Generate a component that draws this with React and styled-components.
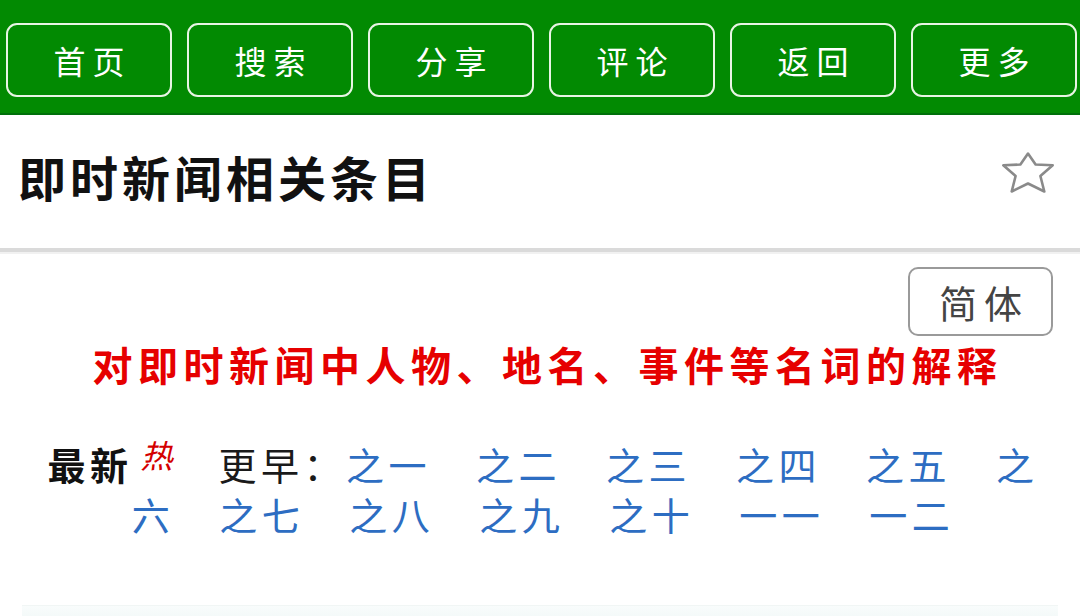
import React from "react";
import styled, { createGlobalStyle } from "styled-components";

const Global = createGlobalStyle`
  html, body {
    margin: 0;
    padding: 0;
    background: #ffffff;
  }
  body {
    font-family: "Noto Sans CJK SC", "Noto Sans", sans-serif;
    color: #111;
  }
`;

const Page = styled.div`
  width: 1080px;
  min-height: 616px;
  overflow: hidden;
  background: #fff;
`;

const NavBar = styled.header`
  background: #028a02;
  padding: 23px 3px 16px 6px;
  border-bottom: 2px solid #00700a;
  display: grid;
  grid-template-columns: repeat(6, 1fr);
  column-gap: 15px;
`;

const NavButton = styled.button`
  height: 74px;
  border: 2.5px solid #e8f5e4;
  border-radius: 11px;
  background: transparent;
  color: #fff;
  font-family: "Noto Sans CJK SC", sans-serif;
  font-size: 32px;
  letter-spacing: 7px;
  padding: 0 0 0 7px;
  cursor: pointer;
`;

const TitleBar = styled.section`
  height: 137px;
  box-sizing: border-box;
  display: flex;
  align-items: center;
  justify-content: space-between;
  padding: 0 25px 12px 18px;
  border-bottom: 4px solid #dadada;
  box-shadow: 0 2px 0 #f1f1f1;
`;

const Title = styled.h1`
  margin: 0;
  font-size: 48px;
  font-weight: 700;
  letter-spacing: 4px;
  color: #111;
`;

const StarButton = styled.button`
  align-self: flex-start;
  margin-top: 36px;
  padding: 0;
  border: 0;
  background: none;
  display: flex;
  cursor: pointer;
`;

const Content = styled.main`
  padding-top: 15px;
`;

const LangRow = styled.div`
  display: flex;
  justify-content: flex-end;
  padding-right: 27px;
`;

const LangButton = styled.button`
  width: 145px;
  height: 69px;
  border: 2px solid #9a9a9a;
  border-radius: 10px;
  background: #fff;
  color: #444;
  font-family: "Noto Sans CJK SC", sans-serif;
  font-size: 38px;
  letter-spacing: 7px;
  padding: 0 0 0 7px;
  cursor: pointer;
`;

const Lead = styled.p`
  margin: 3px 0 0;
  line-height: 50px;
  text-align: center;
  font-size: 40px;
  font-weight: 700;
  letter-spacing: 5.5px;
  padding-left: 15px;
  color: #e60000;
`;

const Index = styled.p`
  margin: 49px 0 0;
  line-height: 50px;
  text-align: center;
  white-space: nowrap;
  font-size: 38px;
  letter-spacing: 4.5px;
  padding-left: 6px;
  color: #1a1a1a;
`;

const Latest = styled.strong`
  font-weight: 700;
  color: #111;
`;

const Hot = styled.em`
  font-size: 32px;
  letter-spacing: 0;
  color: #d40000;
  vertical-align: 12px;
  line-height: 1;
  margin: 0 46px 0 8px;
`;

const Earlier = styled.span`
  color: #1a1a1a;
`;

const PartLink = styled.a`
  color: #2d6dc2;
  text-decoration: none;
  cursor: pointer;
  & + & {
    margin-left: 45px;
  }
`;

const Strip = styled.div`
  margin: 66px 22px 0;
  height: 12px;
  border-top: 1px solid #f1f6f5;
  background: linear-gradient(#f9fcfc, #f3f9f8);
`;

const Star = () => (
  <svg width="54" height="43" viewBox="0 0 54 43" aria-hidden="true">
    <polygon
      points="27,2.5 34.6,13.5 51.7,14.3 39.4,25 43.3,40.5 27,32.5 10.7,40.5 14.6,25 2.3,14.3 19.4,13.5"
      fill="none"
      stroke="#8a8a8a"
      strokeWidth="2.6"
      strokeLinejoin="round"
    />
  </svg>
);

const navItems = ["首页", "搜索", "分享", "评论", "返回", "更多"];
const firstLine = ["之一", "之二", "之三", "之四", "之五"];
const secondLine = ["之七", "之八", "之九", "之十", "一一", "一二"];

export default function App() {
  return (
    <Page>
      <Global />
      <NavBar>
        {navItems.map((label) => (
          <NavButton key={label}>{label}</NavButton>
        ))}
      </NavBar>
      <TitleBar>
        <Title>即时新闻相关条目</Title>
        <StarButton aria-label="收藏">
          <Star />
        </StarButton>
      </TitleBar>
      <Content>
        <LangRow>
          <LangButton>简体</LangButton>
        </LangRow>
        <Lead>对即时新闻中人物、地名、事件等名词的解释</Lead>
        <Index>
          <Latest>最新</Latest>
          <Hot>热</Hot>
          <Earlier>更早：</Earlier>
          {firstLine.map((t) => (
            <PartLink key={t}>{t}</PartLink>
          ))}
          <PartLink>
            之<br />六
          </PartLink>
          {secondLine.map((t) => (
            <PartLink key={t}>{t}</PartLink>
          ))}
        </Index>
        <Strip />
      </Content>
    </Page>
  );
}
